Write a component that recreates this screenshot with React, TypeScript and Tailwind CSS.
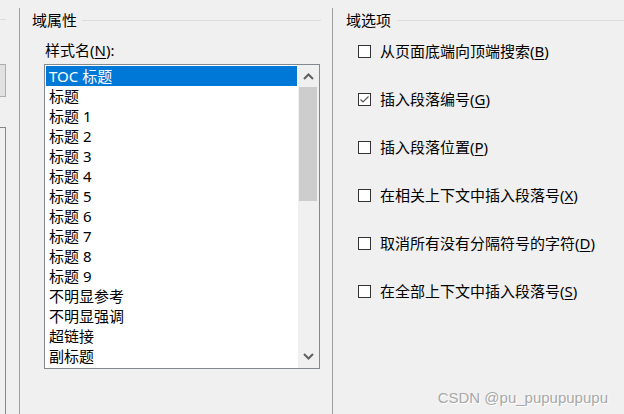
import React from "react";

const items = [
  "TOC 标题",
  "标题",
  "标题 1",
  "标题 2",
  "标题 3",
  "标题 4",
  "标题 5",
  "标题 6",
  "标题 7",
  "标题 8",
  "标题 9",
  "不明显参考",
  "不明显强调",
  "超链接",
  "副标题",
];

const options: { pre: string; key: string; checked?: boolean }[] = [
  { pre: "从页面底端向顶端搜索", key: "B" },
  { pre: "插入段落编号", key: "G", checked: true },
  { pre: "插入段落位置", key: "P" },
  { pre: "在相关上下文中插入段落号", key: "X" },
  { pre: "取消所有没有分隔符号的字符", key: "D" },
  { pre: "在全部上下文中插入段落号", key: "S" },
];

const font = { fontFamily: "'Noto Sans', 'Noto Sans CJK SC', sans-serif" };

function Checkbox({ checked }: { checked?: boolean }) {
  return (
    <div className="w-[13px] h-[13px] border border-[#333333] bg-white flex items-center justify-center shrink-0">
      {checked && (
        <svg width="11" height="11" viewBox="0 0 11 11">
          <polyline points="1.5,5.5 4,8 9.5,2.5" fill="none" stroke="#555" strokeWidth="1.2" />
        </svg>
      )}
    </div>
  );
}

export default function App() {
  return (
    <div
      className="relative w-[624px] h-[414px] bg-[#f0f0f0] flex overflow-hidden text-[15px] text-black"
      style={font}
    >
      {/* left strip */}
      <div className="w-[19px] flex flex-col shrink-0">
        <div className="mt-[19px] w-[6px] h-px bg-[#dcdcdc]" />
        <div className="mt-[44px] w-[6px] h-[33px] bg-[#e1e1e1] border border-l-0 border-[#adadad]" />
        <div className="mt-[30px] w-[6px] flex-1 border-t border-r border-[#828790]" />
      </div>
      <div className="w-px mt-[8px] self-stretch bg-[#a0a0a0]" />

      {/* main panel */}
      <div className="w-[312px] shrink-0 flex flex-col">
        <div className="mt-[10px] pl-[12px] pr-[11px] flex items-center h-[20px]">
          <span className="leading-[20px]">域属性</span>
          <div className="ml-[5px] flex-1 h-px bg-[#dcdcdc]" />
        </div>
        <div className="mt-[10px] pl-[25px] leading-[20px]">
          样式名(<span className="underline underline-offset-2">N</span>):
        </div>
        <div className="mt-[4px] ml-[24px] w-[276px] h-[305px] border border-[#828790] bg-white flex">
          <div className="flex-1 p-px flex flex-col">
            {items.map((t, i) => (
              <div
                key={t}
                className={
                  "h-[20px] leading-[20px] pl-[3px] whitespace-nowrap " +
                  (i === 0 ? "bg-[#0078d7] text-white" : "")
                }
              >
                {t}
              </div>
            ))}
          </div>
          <div className="w-[21px] bg-[#f0f0f0] flex flex-col items-center">
            <div className="h-[22px] w-full flex items-center justify-center">
              <svg width="11" height="7" viewBox="0 0 11 7">
                <polyline points="1,6 5.5,1.5 10,6" fill="none" stroke="#606060" strokeWidth="2" />
              </svg>
            </div>
            <div className="w-[18px] h-[114px] bg-[#cdcdcd] ml-[-1px]" />
            <div className="flex-1" />
            <div className="h-[22px] w-full flex items-center justify-center mb-[1px]">
              <svg width="11" height="7" viewBox="0 0 11 7">
                <polyline points="1,1 5.5,5.5 10,1" fill="none" stroke="#606060" strokeWidth="2" />
              </svg>
            </div>
          </div>
        </div>
      </div>
      <div className="w-px mt-[8px] self-stretch bg-[#a0a0a0]" />

      {/* right panel */}
      <div className="flex-1 flex flex-col">
        <div className="mt-[10px] pl-[13px] flex items-center h-[20px]">
          <span className="leading-[20px]">域选项</span>
          <div className="ml-[6px] flex-1 h-px bg-[#dcdcdc]" />
        </div>
        <div className="mt-[11px] pl-[25px] flex flex-col gap-[28px]">
          {options.map((o) => (
            <div key={o.key} className="flex items-center h-[20px]">
              <Checkbox checked={o.checked} />
              <span className="ml-[9px] leading-[20px] whitespace-nowrap">
                {o.pre}(<span className="underline underline-offset-2">{o.key}</span>)
              </span>
            </div>
          ))}
        </div>
      </div>

      <div
        className="absolute right-[16px] bottom-[7px] text-[15px] leading-[18px] text-[#a8a8a8]"
        style={{ fontFamily: "'Liberation Sans', Arial, sans-serif", textShadow: "1px 1px 0 #ffffff" }}
      >
        CSDN @pu_pupupupupu
      </div>
    </div>
  );
}
